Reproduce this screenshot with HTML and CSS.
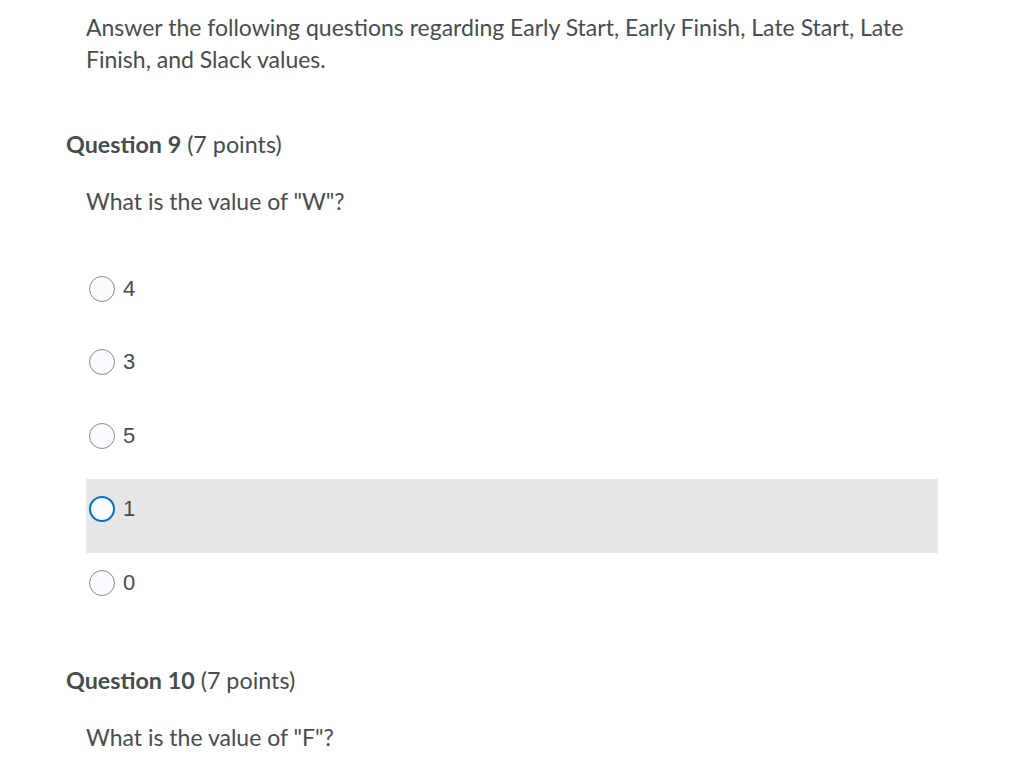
FILE: index.html
```html
<!DOCTYPE html>
<html>
<head>
<meta charset="utf-8">
<link rel="stylesheet" href="styles.css">
</head>
<body>
<div class="page">
  <p class="intro">Answer the following questions regarding Early Start, Early Finish, Late Start, Late Finish, and Slack values.</p>

  <h2 class="q-title q9"><strong>Question 9</strong> (7 points)</h2>
  <p class="q-text">What is the value of "W"?</p>
  <ul class="options">
    <li class="option"><span class="radio"></span><span class="label">4</span></li>
    <li class="option"><span class="radio"></span><span class="label">3</span></li>
    <li class="option"><span class="radio"></span><span class="label">5</span></li>
    <li class="option active"><span class="radio"></span><span class="label">1</span></li>
    <li class="option"><span class="radio"></span><span class="label">0</span></li>
  </ul>

  <h2 class="q-title q10"><strong>Question 10</strong> (7 points)</h2>
  <p class="q-text">What is the value of "F"?</p>
</div>
</body>
</html>
```
FILE: styles.css
```css
html, body {
  margin: 0;
  padding: 0;
  background: #ffffff;
}
body {
  font-family: Lato, "Noto Sans", sans-serif;
  color: #494c4e;
}
.page {
  padding-left: 66px;
  width: 872px;
}
.intro {
  margin: 0;
  padding: 11px 0 0 20px;
  font-size: 23px;
  line-height: 32px;
}
.q-title {
  margin: 0;
  font-size: 23.3px;
  line-height: 28px;
  font-weight: 400;
}
.q-title strong {
  font-weight: 700;
}
.q9 { margin-top: 55px; }
.q10 { margin-top: 40px; }
.q-text {
  margin: 27px 0 0 20px;
  font-size: 23px;
  line-height: 32px;
}
.options {
  list-style: none;
  margin: 41.5px 0 0 20px;
  padding: 0;
  width: 852px;
}
.option {
  display: flex;
  align-items: center;
  height: 73.5px;
  box-sizing: border-box;
  padding: 17px 0 30.5px 3px;
}
.option.active {
  background: #e6e6e6;
}
.radio {
  width: 26px;
  height: 26px;
  box-sizing: border-box;
  border: 1px solid #8a8a8a;
  border-radius: 50%;
  background: #f9fbff;
  flex: none;
}
.option.active .radio {
  border: 2.5px solid #006fbf;
}
.label {
  margin-left: 8px;
  font-family: "Liberation Sans", Arial, sans-serif;
  font-size: 22px;
  line-height: 26px;
}
```
